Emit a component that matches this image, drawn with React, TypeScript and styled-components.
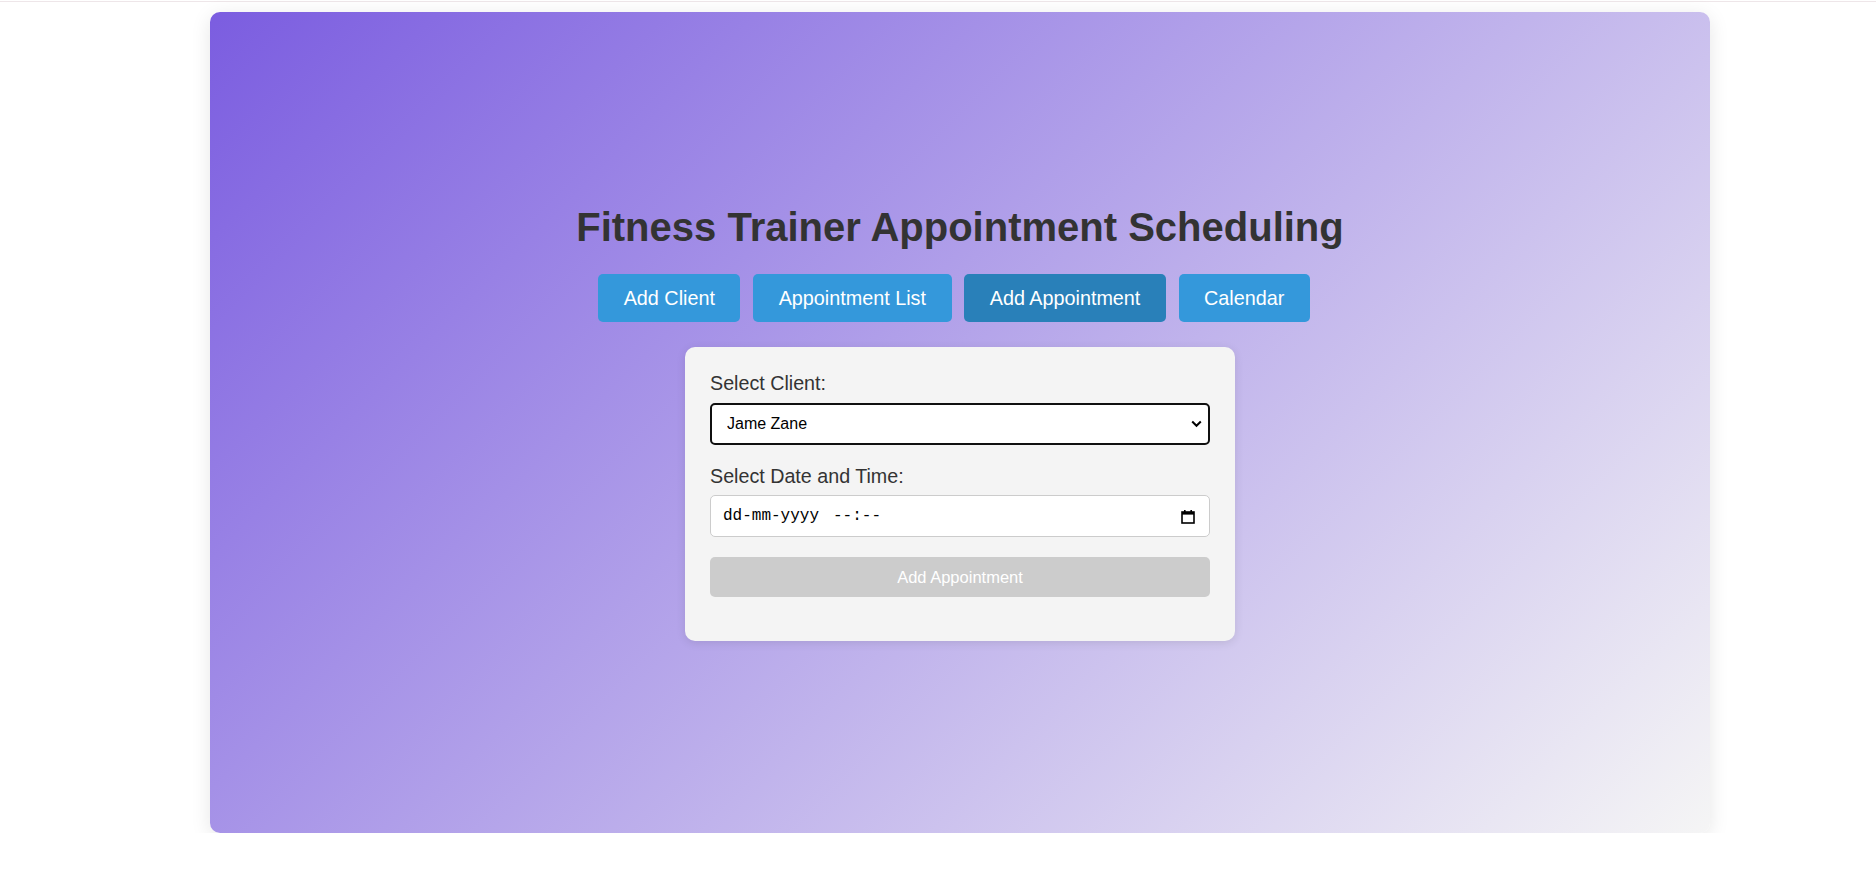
import React, { useState } from "react";
import styled, { createGlobalStyle } from "styled-components";

const GlobalStyle = createGlobalStyle`
  html, body {
    margin: 0;
    padding: 0;
    background: #ffffff;
    font-family: Arial, "Liberation Sans", Helvetica, sans-serif;
  }
  * { box-sizing: border-box; }
`;

const TopRule = styled.div`
  height: 1px;
  margin-top: 1px;
  background: #eee6e9;
`;

const Page = styled.div`
  display: flex;
  padding: 10px 0 0 210px;
`;

const Shell = styled.main`
  width: 1500px;
  height: 821px;
  border-radius: 10px;
  background: linear-gradient(135deg, #7b5de0 0%, #f5f5f5 100%);
  box-shadow: 0 4px 20px rgba(0, 0, 0, 0.1);
  display: flex;
  flex-direction: column;
  align-items: center;
  justify-content: center;
`;

const Title = styled.h1`
  margin: 0;
  font-size: 40px;
  font-weight: bold;
  line-height: 46px;
  color: #333333;
  text-align: center;
`;

const Nav = styled.nav`
  display: flex;
  gap: 12.7px;
  margin-top: 24px;
  padding-right: 12px;
`;

const NavButton = styled.button<{ $active?: boolean }>`
  height: 48px;
  padding: 0 25.5px;
  border: none;
  border-radius: 5px;
  background: ${(p) => (p.$active ? "#2980b9" : "#3498db")};
  color: #ffffff;
  font-family: Arial, "Liberation Sans", sans-serif;
  font-size: 19.8px;
  cursor: pointer;
`;

const Card = styled.form`
  margin-top: 25px;
  width: 550px;
  padding: 25px 25px 44px;
  background: #f4f4f4;
  border-radius: 10px;
  box-shadow: 0 2px 10px rgba(0, 0, 0, 0.1);
  display: flex;
  flex-direction: column;
`;

const Label = styled.label<{ $spaced?: boolean }>`
  display: block;
  font-size: 19.7px;
  line-height: 23px;
  color: #333333;
  margin-top: ${(p) => (p.$spaced ? "20px" : "0")};
  margin-bottom: 7.5px;
`;

const SelectWrap = styled.div`
  position: relative;
  width: 500px;
  height: 42px;
`;

const Select = styled.select`
  width: 100%;
  height: 100%;
  padding: 0 30px 0 15px;
  border: 2px solid #101010;
  border-radius: 5px;
  background: #ffffff;
  color: #000000;
  font-family: Arial, "Liberation Sans", sans-serif;
  font-size: 16px;
  outline: none;
  appearance: none;
  -webkit-appearance: none;
`;

const Chevron = styled.svg`
  position: absolute;
  right: 8px;
  top: 17px;
  pointer-events: none;
`;

const DateField = styled.div`
  width: 500px;
  height: 42px;
  padding: 0 14px 0 12px;
  border: 1px solid #cccccc;
  border-radius: 5px;
  background: #ffffff;
  display: flex;
  align-items: center;
`;

const DatePart = styled.span<{ $gap?: boolean }>`
  font-family: "Liberation Mono", "DejaVu Sans Mono", monospace;
  font-size: 16px;
  color: #000000;
  white-space: pre;
  margin-left: ${(p) => (p.$gap ? "14px" : "0")};
`;

const IconSlot = styled.span`
  margin-left: auto;
  display: flex;
  align-items: center;
`;

const SubmitButton = styled.button`
  margin-top: 20px;
  width: 500px;
  height: 40px;
  border: none;
  border-radius: 5px;
  background: #cccccc;
  color: #ffffff;
  font-family: Arial, "Liberation Sans", sans-serif;
  font-size: 16.5px;
`;

const CalendarIcon = () => (
  <svg width="14" height="15" viewBox="0 0 14 15" aria-hidden="true">
    <rect x="1" y="3" width="12" height="11" fill="none" stroke="#000" strokeWidth="1.6" />
    <rect x="1" y="3" width="12" height="2.6" fill="#000" />
    <rect x="3" y="1" width="1.6" height="3" fill="#000" />
    <rect x="9.4" y="1" width="1.6" height="3" fill="#000" />
  </svg>
);

export default function App() {
  const [tab, setTab] = useState("Add Appointment");
  const tabs = ["Add Client", "Appointment List", "Add Appointment", "Calendar"];
  return (
    <>
      <GlobalStyle />
      <TopRule />
      <Page>
        <Shell>
          <Title>Fitness Trainer Appointment Scheduling</Title>
          <Nav>
            {tabs.map((t) => (
              <NavButton key={t} $active={t === tab} onClick={() => setTab(t)}>
                {t}
              </NavButton>
            ))}
          </Nav>
          <Card onSubmit={(e) => e.preventDefault()}>
            <Label htmlFor="client">Select Client:</Label>
            <SelectWrap>
              <Select id="client" defaultValue="jame">
                <option value="jame">Jame Zane</option>
              </Select>
              <Chevron width="11" height="8" viewBox="0 0 11 8" aria-hidden="true">
                <path d="M1.2 1.5 L5.5 5.8 L9.8 1.5" fill="none" stroke="#000" strokeWidth="2" />
              </Chevron>
            </SelectWrap>
            <Label $spaced>Select Date and Time:</Label>
            <DateField>
              <DatePart>dd-mm-yyyy</DatePart>
              <DatePart $gap>--:--</DatePart>
              <IconSlot>
                <CalendarIcon />
              </IconSlot>
            </DateField>
            <SubmitButton type="submit" disabled>
              Add Appointment
            </SubmitButton>
          </Card>
        </Shell>
      </Page>
    </>
  );
}
